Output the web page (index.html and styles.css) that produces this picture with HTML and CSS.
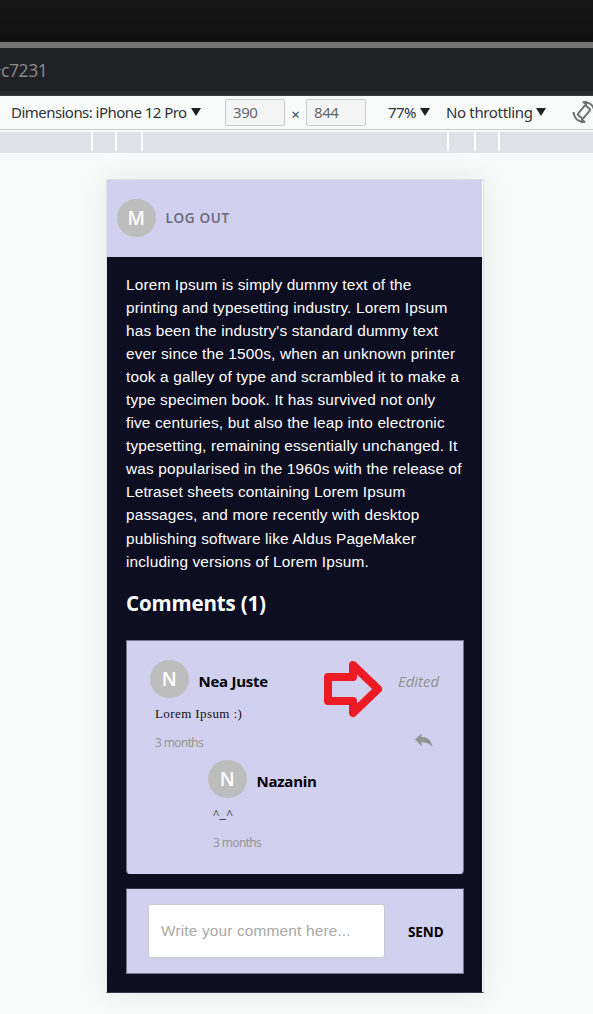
FILE: index.html
```html
<!DOCTYPE html>
<html lang="en">
<head>
<meta charset="utf-8">
<title>Comments</title>
<link rel="stylesheet" href="styles.css">
</head>
<body>
<div class="tabstrip"></div>
<div class="addressbar"><i class="dash"></i><span class="url">c7231</span></div>
<div class="toolbar">
  <span class="device">Dimensions: iPhone 12 Pro</span><i class="caret"></i>
  <span class="size width">390</span>
  <span class="times">×</span>
  <span class="size">844</span>
  <span class="scale">77%</span><i class="caret"></i>
  <span class="throttle">No throttling</span><i class="caret"></i>
  <svg class="rotate" width="24" height="24" viewBox="0 0 24 24" fill="none" stroke="#6e6e6e" stroke-width="2"><rect x="8.500" y="6" width="7" height="12" rx="1" transform="rotate(40 12 12)"/><path d="M1.500 12C2 18 6 22 13 22M22.500 12C22 6 18 2 11 2"/><path d="M9 17.500l5 4.500-5 1zM15 6.500l-5-4.500 5-1z" fill="#6e6e6e" stroke="none"/></svg>
</div>
<div class="ruler"><i class="r1"></i><i class="r2"></i><i class="r3"></i><i class="r4"></i><i class="r5"></i><i class="r6"></i><i class="r7"></i></div>
<main class="stage">
  <div class="phone">
    <header class="top"><span class="avatar">M</span><span class="logout">LOG OUT</span></header>
    <section class="content">
      <p class="article">Lorem Ipsum is simply dummy text of the<br>printing and typesetting industry. Lorem Ipsum<br>has been the industry's standard dummy text<br>ever since the 1500s, when an unknown printer<br>took a galley of type and scrambled it to make a<br>type specimen book. It has survived not only<br>five centuries, but also the leap into electronic<br>typesetting, remaining essentially unchanged. It<br>was popularised in the 1960s with the release of<br>Letraset sheets containing Lorem Ipsum<br>passages, and more recently with desktop<br>publishing software like Aldus PageMaker<br>including versions of Lorem Ipsum.</p>
      <h2 class="heading">Comments (1)</h2>
      <div class="comments">
        <article class="comment">
          <div class="row"><span class="avatar">N</span><span class="name">Nea Juste</span><span class="edited">Edited</span></div>
          <p class="text">Lorem Ipsum :)</p>
          <div class="meta"><span class="age">3 months</span>
            <svg class="reply" width="18" height="15" viewBox="0 0 18 15" fill="#929292"><path d="M0 6.500L6.500 0.500V4C12 4 16.500 7 17.500 14C14.500 10.500 11 9.200 6.500 9.200V13Z"/></svg>
          </div>
        </article>
        <article class="comment nested">
          <div class="row"><span class="avatar">N</span><span class="name">Nazanin</span></div>
          <p class="text">^_^</p>
          <div class="meta"><span class="age">3 months</span></div>
        </article>
        <svg class="pointer" width="60" height="58" viewBox="0 0 60 58" fill="none" stroke="#ed1c24" stroke-width="8" stroke-linejoin="round"><path d="M5 17H30V5L55 29L30 53V41H5Z"/></svg>
      </div>
      <form class="compose"><input class="field" type="text" placeholder="Write your comment here..."><span class="send">SEND</span></form>
    </section>
  </div>
</main>
</body>
</html>
```
FILE: styles.css
```css
* { box-sizing: border-box; }
body { margin: 0; height: 1014px; overflow: hidden; background: #f8faf9; font-family: "Open Sans", "Noto Sans", sans-serif; }
.tabstrip { height: 48px; background: linear-gradient(#171717, #101010) 0 0 / 100% 42px no-repeat, #737373; }
.addressbar { height: 48px; background: linear-gradient(#202124 0 43px, #292929 43px 47px, #3a3a3a 47px); display: flex; align-items: center; padding-bottom: 5px; }
.dash { width: 1px; height: 1px; background: #8c8c8c; }
.url { font-size: 17.500px; color: #8c8c8c; letter-spacing: -0.400px; white-space: nowrap; }
.toolbar { height: 34px; border-bottom: 1px solid #c9cccd; display: flex; align-items: center; padding: 0 0 1px 11px; font-family: "Noto Sans", sans-serif; font-size: 15px; color: #303236; white-space: nowrap; }
.toolbar span, .toolbar svg { flex: none; }
.device { width: 177px; letter-spacing: -0.540px; }
.caret { flex: none; width: 10px; height: 8px; margin-left: 3px; background: #202124; clip-path: polygon(0 0, 100% 0, 50% 100%); }
.size { width: 60px; height: 27px; border: 1px solid #c9cccd; border-radius: 2px; background: #f5f5f5; color: #666; line-height: 25px; padding-left: 7px; letter-spacing: -0.400px; }
.size.width { margin-left: 24px; }
.times { width: 21px; text-align: center; color: #24466b; padding-top: 4px; }
.scale { width: 29px; margin-left: 22px; letter-spacing: -0.600px; }
.throttle { width: 87px; margin-left: 16px; letter-spacing: -0.350px; }
.rotate { margin-left: 26px; }
.ruler { height: 21px; margin-top: 2px; display: flex; gap: 2px; border-bottom: 2px solid #dee1e6; background: #fff; }
.ruler i { background: #dee1e6; flex: none; }
.r1 { width: 91px; } .r2 { width: 22px; } .r3 { width: 24px; } .r4 { width: 304px; } .r5 { width: 25px; } .r6 { width: 22px; } .r7 { width: 93px; }
.stage { padding: 26px 0 0 106px; }
.phone { width: 378px; height: 814px; border: 1px solid #dedfdf; border-left-color: #e4e4e4; border-bottom-color: #39364f; background: #0d0e22; box-shadow: inset -1px 0 #fff, 0 0 30px rgba(0,0,0,.07); }
.top { width: 375px; height: 77px; background: #d1d0ee; display: flex; align-items: center; padding: 0 0 1px 10px; }
.avatar { width: 38.500px; height: 38.500px; border-radius: 50%; background: #bdbdbd; color: #fff; font-size: 19px; font-weight: 600; display: flex; align-items: center; justify-content: center; flex: none; padding-bottom: 1px; }
.logout { margin-left: 10px; font-size: 13.500px; font-weight: 600; letter-spacing: .660px; color: #686778; }
.content { padding: 15.500px 19px 0; width: 376px; }
.article { margin: 0; font: 15.400px/23.100px "Liberation Sans", Arial, sans-serif; letter-spacing: .150px; color: #fff; white-space: nowrap; }
.heading { margin: 14px 0 0; font-size: 20.500px; line-height: 33px; height: 53px; font-weight: 700; color: #fff; letter-spacing: -.150px; }
.comments { position: relative; width: 338px; height: 234px; background: #d1d0ee; border: 1px solid #77758a; border-bottom-color: #d1d0ee; border-radius: 0 0 4px 4px; padding: 19px 23px 0; }
.row { display: flex; align-items: center; height: 39px; }
.name { margin: 3px 0 0 10px; font-size: 15px; font-weight: 700; letter-spacing: -.250px; color: #000; }
.edited { margin: 4px 1px 0 auto; font-size: 15px; letter-spacing: -.050px; font-style: italic; color: #929292; }
.text { margin: 6px 0 0 5px; height: 18px; font: 13px/18px "Liberation Serif", "Times New Roman", serif; color: #111; letter-spacing: .400px; }
.meta { height: 37px; padding: 10px 7px 0 5px; display: flex; justify-content: space-between; }
.age { font-size: 12px; line-height: 19px; letter-spacing: -.600px; color: #929292; }
.nested { padding-left: 58px; }
.pointer { position: absolute; left: 196px; top: 19px; }
.compose { margin: 14px 0 0; width: 338px; height: 86px; background: #d1d0ee; border: 1px solid #77758a; border-top-color: #39364f; display: flex; align-items: center; padding-left: 21px; }
.field { width: 237px; height: 54px; border: 1px solid #ccc; border-radius: 3px; background: #fff; padding: 0 12px; font: 15.400px "Liberation Sans", Arial, sans-serif; letter-spacing: .170px; }
.field::placeholder { color: #a9a9a9; opacity: 1; }
.send { margin: 2px 0 0 23px; font-size: 13.500px; font-weight: 700; letter-spacing: -.100px; color: #000; }
```
